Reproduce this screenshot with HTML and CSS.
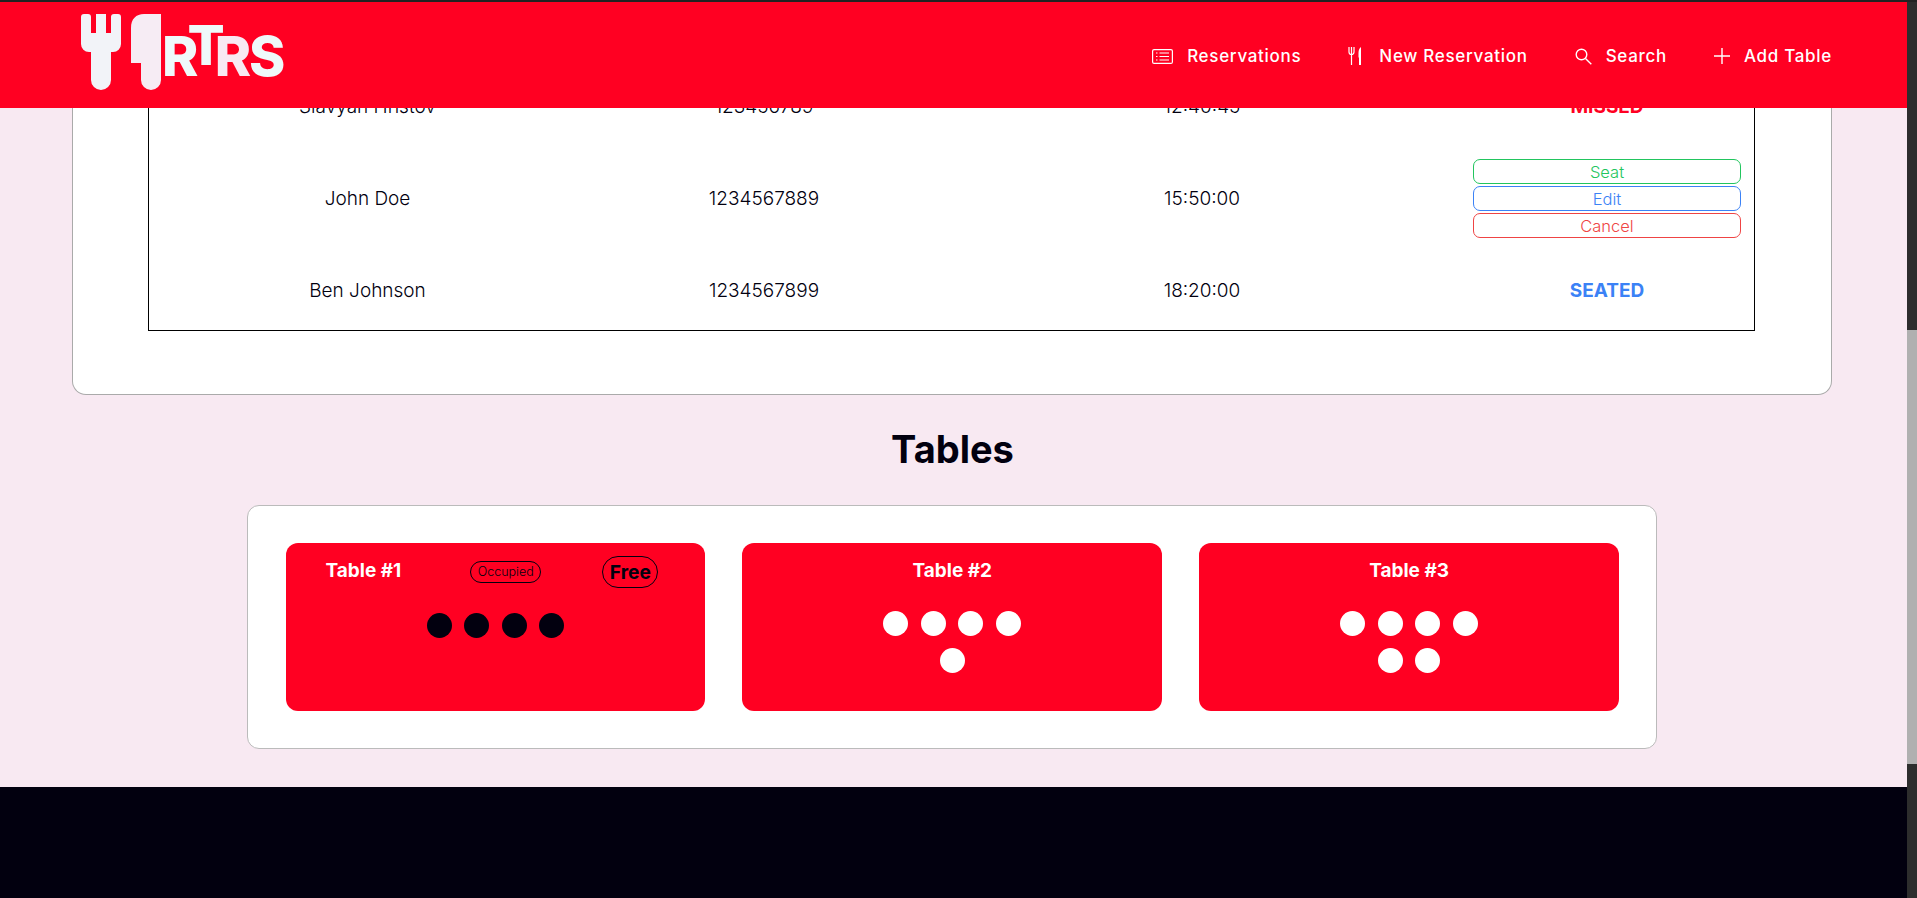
FILE: index.html
```html
<!DOCTYPE html>
<html lang="en">
<head>
    <meta charset="UTF-8">
    <title>RTRS</title>
    <link rel="stylesheet" href="styles.css">
</head>
<body>
    <div class="top-line"></div>
    <div class="window">
        <div class="page">
            <header class="header">
                <a class="logo" href="#">
                    <svg class="logo-icons" width="80" height="76" viewBox="0 0 80 76">
                        <path fill="#f2f3f8" d="M3 0h4a3 3 0 0 1 3 3v16h5V0h10v19h5V3a3 3 0 0 1 3-3h4a3 3 0 0 1 3 3v27a8 8 0 0 1-8 8h-2v28a10 10 0 0 1-20 0V38h-2a8 8 0 0 1-8-8V3a3 3 0 0 1 3-3z"/>
                        <path fill="#f6ecf4" d="M63 0h17v66a10 10 0 0 1-20 0V49H50V14C50 5 55 0 63 0z"/>
                    </svg>
                    <span class="logo-text"><span class="logo-r">R</span><span class="logo-t">T</span><span class="logo-r2">R</span><span class="logo-s">S</span></span>
                </a>
                <nav class="nav">
                    <a class="nav-link" href="#">
                        <svg width="21" height="15" viewBox="0 0 21 15" fill="none" stroke="#fff" stroke-width="1.2"><rect x=".6" y=".6" width="19.8" height="13.8" rx="1.5"/><path d="M4 4h1.500M4 7.500h1.500M4 11h1.500M7.500 4H17M7.500 7.500H17M7.500 11H17"/></svg>
                        Reservations
                    </a>
                    <a class="nav-link nav-link-wide" href="#">
                        <svg width="14" height="18" viewBox="0 0 14 18" fill="none" stroke="#fff" stroke-width="1.2"><path d="M1 0v5c0 1.500 1 2.500 2.500 2.500S6 6.500 6 5V0M3.500 0v18"/><path fill="#fff" stroke="none" d="M11 18h2V0c-1.500 1-2.500 3-2.500 6v4.500H11z"/></svg>
                        New Reservation
                    </a>
                    <a class="nav-link" href="#">
                        <svg width="17" height="17" viewBox="0 0 17 17" fill="none" stroke="#fff" stroke-width="1.4"><circle cx="6.500" cy="6.500" r="5.300"/><path d="M10.500 10.500l5.800 5.800"/></svg>
                        Search
                    </a>
                    <a class="nav-link" href="#">
                        <svg width="16" height="16" viewBox="0 0 16 16" fill="none" stroke="#fff" stroke-width="1.4"><path d="M8 0v16M0 8h16"/></svg>
                        Add Table
                    </a>
                </nav>
            </header>

            <main class="main">
                <section class="reservations-card">
                    <table class="res-table">
                        <tr class="row-short">
                            <td class="col-name">Slavyan Hristov</td>
                            <td class="col-phone">123456789</td>
                            <td class="col-time">12:40:45</td>
                            <td class="col-status status-missed">MISSED</td>
                        </tr>
                        <tr class="row-tall">
                            <td>John Doe</td>
                            <td>1234567889</td>
                            <td>15:50:00</td>
                            <td class="col-actions">
                                <button class="res-btn btn-seat">Seat</button>
                                <button class="res-btn btn-edit">Edit</button>
                                <button class="res-btn btn-cancel">Cancel</button>
                            </td>
                        </tr>
                        <tr class="row-short">
                            <td>Ben Johnson</td>
                            <td>1234567899</td>
                            <td>18:20:00</td>
                            <td class="status-seated">SEATED</td>
                        </tr>
                    </table>
                </section>

                <h2 class="tables-title">Tables</h2>

                <section class="tables-card">
                    <div class="table-item">
                        <div class="table-head table-head-split">
                            <span class="table-name">Table #1</span>
                            <span class="pill pill-occupied">Occupied</span>
                            <span class="pill pill-free">Free</span>
                        </div>
                        <div class="seats seats-dark">
                            <span class="seat"></span><span class="seat"></span><span class="seat"></span><span class="seat"></span>
                        </div>
                    </div>
                    <div class="table-item">
                        <div class="table-head">
                            <span class="table-name">Table #2</span>
                        </div>
                        <div class="seats">
                            <span class="seat"></span><span class="seat"></span><span class="seat"></span><span class="seat"></span><span class="seat"></span>
                        </div>
                    </div>
                    <div class="table-item">
                        <div class="table-head">
                            <span class="table-name">Table #3</span>
                        </div>
                        <div class="seats">
                            <span class="seat"></span><span class="seat"></span><span class="seat"></span><span class="seat"></span><span class="seat"></span><span class="seat"></span>
                        </div>
                    </div>
                </section>
            </main>

            <footer class="footer"></footer>
        </div>
        <div class="scrollbar"><div class="scrollbar-thumb"></div></div>
    </div>
</body>
</html>
```

FILE: styles.css
```css
* {
    box-sizing: border-box;
}

body {
    margin: 0;
    height: 898px;
    overflow: hidden;
    font-family: Inter, "Liberation Sans", sans-serif;
    color: #02000f;
    background-color: #f8e9f2;
}

.top-line {
    height: 2px;
    background-color: #222;
}

.window {
    display: flex;
    height: 896px;
}

.page {
    flex: 1;
    display: flex;
    flex-direction: column;
    overflow: hidden;
}

.scrollbar {
    width: 10px;
    padding-top: 328px;
    background-color: #2d2d2d;
}

.scrollbar-thumb {
    height: 434px;
    background-color: #b0b0b0;
}

/* header */
.header {
    position: relative;
    z-index: 2;
    flex: none;
    height: 106px;
    display: flex;
    justify-content: space-between;
    padding: 12px 75px 0 81px;
    background-color: #ff0022;
}

.logo {
    display: flex;
    align-items: flex-start;
    text-decoration: none;
}

.logo-icons {
    flex: none;
}

.logo-text {
    display: flex;
    margin-left: 1px;
    font-family: Inter, sans-serif;
    font-weight: 800;
    font-size: 55px;
    line-height: 52px;
}

.logo-r, .logo-s {
    color: #eff9fa;
}

.logo-r {
    margin-top: 16px;
}

.logo-t {
    margin-top: 5px;
    margin-left: -11px;
    color: #eff9fa;
}

.logo-r2 {
    margin-top: 16px;
    margin-left: -10px;
    color: #f8e9f2;
}

.logo-s {
    margin-top: 16px;
    margin-left: -2px;
}

.nav {
    display: flex;
    align-items: center;
    gap: 47px;
    height: 84px;
}

.nav-link {
    display: flex;
    align-items: center;
    gap: 14px;
    color: #fff;
    font-family: Inter, sans-serif;
    font-size: 17px;
    font-weight: 500;
    letter-spacing: 0.7px;
    text-decoration: none;
}

.nav-link-wide {
    gap: 17px;
}

/* main */
.main {
    flex: 1;
    margin-top: -80px;
}

.reservations-card {
    height: 367px;
    margin: 0 75px 0 72px;
    padding: 40px 76px 0 75px;
    background-color: #fff;
    border: 1px solid #aaa;
    border-top: none;
    border-radius: 0 0 14px 14px;
}

.res-table {
    width: 100%;
    table-layout: fixed;
    padding-bottom: 2px;
    border: 1px solid #000;
    border-top: none;
    border-collapse: separate;
    border-spacing: 2px;
    text-align: center;
    font-size: 19px;
    font-weight: 300;
}

.row-short td {
    height: 72px;
}

.row-tall td {
    height: 108px;
}

.res-table td {
    padding: 0;
}

.res-table .col-actions {
    padding-bottom: 2px;
}

.col-name { width: 433px; }
.col-phone { width: 356px; }
.col-time { width: 516px; }

.status-missed {
    color: #ff0022;
    font-weight: 700;
}

.status-seated {
    color: #3b82f6;
    font-weight: 700;
}

.res-btn {
    display: block;
    width: 268px;
    height: 25px;
    margin: 2px auto 0;
    padding: 1px 0 0;
    background: none;
    border: 1px solid;
    border-radius: 7px;
    font-family: Inter, sans-serif;
    font-size: 16.5px;
    font-weight: 300;
    line-height: 22px;
}

.btn-seat { color: #22c55e; border-color: #22c55e; }
.btn-edit { color: #3b82f6; border-color: #3b82f6; }
.btn-cancel { color: #ef4444; border-color: #ef4444; }

.tables-title {
    margin: 0;
    height: 110px;
    padding-top: 32px;
    padding-right: 2px;
    text-align: center;
    font-size: 38px;
    line-height: 44px;
    font-weight: 700;
}

.tables-card {
    display: flex;
    gap: 37px;
    width: 1410px;
    margin-left: 247px;
    padding: 37px 37px 37px 37.5px;
    background-color: #fff;
    border: 1px solid #bbb;
    border-radius: 12px;
}

.table-item {
    flex: 1;
    height: 168px;
    padding-top: 13px;
    border-radius: 12px;
    background-color: #ff0022;
}

.table-head {
    display: flex;
    justify-content: center;
    align-items: center;
    height: 28px;
}

.table-head-split {
    justify-content: flex-start;
    height: 32px;
    padding-left: 40px;
}

.table-head-split .table-name {
    margin-bottom: 3px;
}

.table-name {
    color: #fff;
    font-size: 19px;
    font-weight: 700;
}

.pill {
    display: block;
    border: 1px solid #02000f;
    border-radius: 999px;
}

.pill-occupied {
    margin-left: 69px;
    width: 71px;
    height: 22px;
    font-size: 12.5px;
    font-weight: 300;
    line-height: 20px;
    text-align: center;
}

.pill-free {
    margin-left: 61px;
    width: 56px;
    height: 32px;
    font-size: 19.2px;
    font-weight: 700;
    line-height: 30px;
    text-align: center;
}

.seats {
    display: flex;
    flex-wrap: wrap;
    justify-content: center;
    width: 150px;
    margin: 27px auto 0;
    row-gap: 12px;
}

.seats-dark {
    margin-top: 25px;
}

.seat {
    width: 25px;
    height: 25px;
    margin: 0 6.25px;
    border-radius: 50%;
    background-color: #fff;
}

.seats-dark .seat {
    background-color: #02000f;
}

.footer {
    flex: none;
    height: 111px;
    background-color: #02000f;
}
```
